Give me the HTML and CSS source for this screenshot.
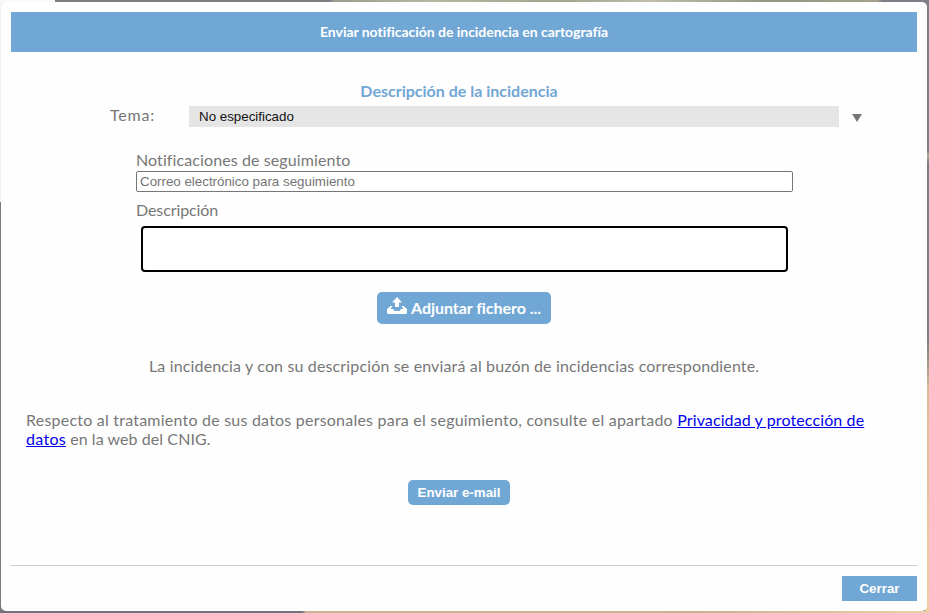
FILE: index.html
```html
<!DOCTYPE html>
<html lang="es">
<head>
<meta charset="utf-8">
<title>Enviar notificación de incidencia en cartografía</title>
<link rel="stylesheet" href="styles.css">
</head>
<body>
<main class="dialog">
  <header class="dialog-title"><span>Enviar notificación de incidencia en cartografía</span></header>
  <section class="dialog-body">
    <h2 class="heading">Descripción de la incidencia</h2>
    <div class="topic">
      <span class="topic-label">Tema:</span>
      <div class="topic-select">No especificado</div>
      <svg class="arrow" width="10" height="8" viewBox="0 0 10 8"><path d="M0 0H10L5 8Z" fill="#777"/></svg>
    </div>
    <div class="fields">
      <label class="label follow" for="email">Notificaciones de seguimiento</label>
      <input class="email" id="email" type="text" placeholder="Correo electrónico para seguimiento">
      <label class="label desc" for="description">Descripción</label>
      <textarea class="description" id="description"></textarea>
    </div>
    <button class="attach" type="button">
      <svg class="upload" width="20" height="18" viewBox="0 0 20 18" fill="#fff"><path d="M10 0L15 5.500H12V10H8V5.500H5Z"/><path d="M3.500 9H5.500L3.500 12H6L7.500 14H12.500L14 12H16.500L14.500 9H16.500L20 12V15.500Q20 17 18.500 17H1.500Q0 17 0 15.500V12Z"/></svg>
      <span>Adjuntar fichero ...</span>
    </button>
    <p class="notice">La incidencia y con su descripción se enviará al buzón de incidencias correspondiente.</p>
    <p class="privacy"><span class="line-one">Respecto al tratamiento de sus datos personales para el seguimiento, consulte el apartado <a href="#">Privacidad y protección de</a></span><br><span class="line-two"><a href="#">datos</a> en la web del CNIG.</span></p>
    <button class="send" type="button">Enviar e-mail</button>
  </section>
  <footer class="dialog-footer"><button class="close" type="button">Cerrar</button></footer>
</main>
</body>
</html>
```

FILE: styles.css
```css
* { box-sizing: border-box; }
body {
  margin: 0;
  padding: 2px 2px 2px 1px;
  height: 613px;
  overflow: hidden;
  font: 16px/19px Lato, "Open Sans", sans-serif;
  color: #777;
  background:
    linear-gradient(90deg, #fafafa 55px, #7d7f83 55px 330px, #9a9d8c 334px, #b8b6a0 430px, #9fa78d 560px, #c0bda9 650px, #90987f 770px, #a6a28c 878px, #7c7f86 882px) 0 0 / 100% 2px no-repeat,
    linear-gradient(90deg, #70747c 302px, #cbb595 306px, #c9b08e 700px, #ecd0a8) 0 611px / 100% 2px no-repeat,
    linear-gradient(#f2f2f2 202px, #777a83 202px) 0 0 / 1px 100% no-repeat,
    linear-gradient(#7c7f86 150px, #a9aa92 156px, #7c7f86 164px, #7c7f86 335px, #8e8d80 355px, #d9bd98 390px, #edcfa6) 100% 0 / 4px 100% no-repeat,
    linear-gradient(#f2f2f2, #f2f2f2) 0 0 / 8px 8px no-repeat,
    #70747c;
}
.dialog {
  display: flex;
  flex-direction: column;
  height: 609px;
  padding: 10px;
  background: #fefefe;
  border-radius: 5px;
}
.dialog-title {
  height: 40px;
  background: #71a7d5;
  color: #fff;
  text-align: center;
  font-size: 14px;
  line-height: 40px;
  font-weight: 700;
  letter-spacing: -.03px;
}
.dialog-body { display: flex; flex-direction: column; flex: 1; }
.heading {
  margin: 29px 10px 0 0;
  height: 25px;
  font-size: 16px;
  line-height: 20px;
  font-weight: 700;
  color: #71a7d5;
  text-align: center;
}
.topic { display: flex; align-items: center; height: 21px; padding-left: 99px; }
.topic-label { width: 79px; padding-bottom: 4px; letter-spacing: .8px; }
.topic-select {
  width: 650px;
  height: 21px;
  padding-left: 10px;
  background: #e5e5e5;
  color: #111;
  font: 13.333px/21px "Liberation Sans", Arial, sans-serif;
}
.arrow { margin: 3px 0 0 13px; }
.fields { display: flex; flex-direction: column; padding-left: 125px; margin-top: 24px; }
.label { height: 20px; line-height: 18px; }
.follow { letter-spacing: .1px; }
.email {
  width: 657px;
  height: 21px;
  padding: 0 3px;
  border: 1px solid #767676;
  border-radius: 2px;
  background: #fff;
  font: 13.333px "Liberation Sans", Arial, sans-serif;
}
.email::placeholder { color: #757575; }
.desc { margin-top: 9px; letter-spacing: -.1px; }
.description {
  width: 647px;
  height: 46px;
  margin: 5px 0 0 5px;
  border: 2px solid #000;
  border-radius: 4px;
  background: #fff;
  resize: none;
}
button { border: 0; background: #71a7d5; color: #fff; padding: 0; font: bold 13.333px "Liberation Sans", Arial, sans-serif; }
.attach {
  display: flex;
  gap: 4px;
  width: 174px;
  height: 32px;
  margin: 20px 0 0 366px;
  padding: 5px 0 0 10px;
  border-radius: 5px;
  font: 700 16px/22px Lato, sans-serif;
  letter-spacing: -.05px;
  white-space: nowrap;
}
.notice { margin: 32px 0 0 138px; white-space: nowrap; letter-spacing: .145px; }
.privacy { margin: 35px 0 0 15px; white-space: nowrap; }
.line-one { letter-spacing: .22px; }
.line-one a { letter-spacing: .11px; }
.line-two { letter-spacing: .07px; }
.line-two a { letter-spacing: .3px; }
.privacy a { color: #0000ee; }
.send { width: 102px; height: 25px; margin: 32px 0 0 397px; border-radius: 5px; }
.dialog-footer { display: flex; justify-content: flex-end; align-items: flex-end; height: 36px; border-top: 1px solid #ccc; }
.close { width: 75px; height: 25px; }
```
